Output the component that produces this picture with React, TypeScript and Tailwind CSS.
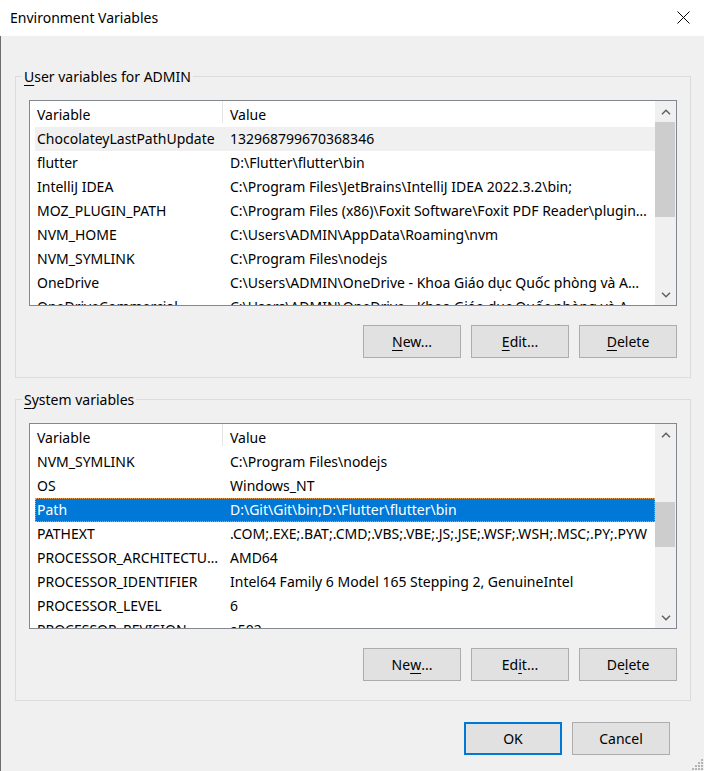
import React from "react";

type Row = [string, string];

const userRows: Row[] = [
  ["ChocolateyLastPathUpdate", "132968799670368346"],
  ["flutter", "D:\\Flutter\\flutter\\bin"],
  ["IntelliJ IDEA", "C:\\Program Files\\JetBrains\\IntelliJ IDEA 2022.3.2\\bin;"],
  ["MOZ_PLUGIN_PATH", "C:\\Program Files (x86)\\Foxit Software\\Foxit PDF Reader\\plugins\\"],
  ["NVM_HOME", "C:\\Users\\ADMIN\\AppData\\Roaming\\nvm"],
  ["NVM_SYMLINK", "C:\\Program Files\\nodejs"],
  ["OneDrive", "C:\\Users\\ADMIN\\OneDrive - Khoa Giáo dục Quốc phòng và An ninh"],
  ["OneDriveCommercial", "C:\\Users\\ADMIN\\OneDrive - Khoa Giáo dục Quốc phòng và An ninh"],
];

const systemRows: Row[] = [
  ["NVM_SYMLINK", "C:\\Program Files\\nodejs"],
  ["OS", "Windows_NT"],
  ["Path", "D:\\Git\\Git\\bin;D:\\Flutter\\flutter\\bin"],
  ["PATHEXT", ".COM;.EXE;.BAT;.CMD;.VBS;.VBE;.JS;.JSE;.WSF;.WSH;.MSC;.PY;.PYW"],
  ["PROCESSOR_ARCHITECTURE", "AMD64"],
  ["PROCESSOR_IDENTIFIER", "Intel64 Family 6 Model 165 Stepping 2, GenuineIntel"],
  ["PROCESSOR_LEVEL", "6"],
  ["PROCESSOR_REVISION", "a502"],
];

function Chevron({ up }: { up: boolean }) {
  return (
    <svg width="10" height="6" viewBox="0 0 10 6" fill="none">
      <path
        d={up ? "M1 5.2 L5 1.2 L9 5.2" : "M1 0.8 L5 4.8 L9 0.8"}
        stroke="#606060"
        strokeWidth="1.5"
      />
    </svg>
  );
}

function ListBox({
  rows,
  hover,
  selected,
  thumbTop,
  thumbHeight,
}: {
  rows: Row[];
  hover?: number;
  selected?: number;
  thumbTop: number;
  thumbHeight: number;
}) {
  return (
    <div className="flex h-[206px] border border-[#828790] bg-white">
      <div className="flex-1 min-w-0 overflow-hidden">
        <div className="flex h-[26px] items-center">
          <div className="ml-[5px] flex h-[22px] w-[188px] items-center self-start border-r border-[#e5e5e5] pl-[2px] pt-[6px]">
            Variable
          </div>
          <div className="flex h-[22px] items-center self-start pl-[7px] pt-[6px]">Value</div>
        </div>
        {rows.map(([k, v], i) => {
          const isSel = i === selected;
          const isHov = i === hover;
          return (
            <div
              key={k + i}
              className={
                "ml-[5px] flex h-[24px] items-center " +
                (isSel
                  ? "bg-[#0078d7] text-white outline outline-1 outline-dotted outline-[#e8a050] -outline-offset-1"
                  : isHov
                  ? "bg-[#f0f0f0]"
                  : "")
              }
            >
              <div className="w-[188px] shrink-0 truncate pl-[2px] pr-[3px]">{k}</div>
              <div className="min-w-0 flex-1 truncate pl-[7px] pr-[8px]">{v}</div>
            </div>
          );
        })}
      </div>
      <div className="flex w-[21px] flex-col bg-[#f0f0f0]">
        <div className="flex h-[21px] items-center justify-center">
          <Chevron up />
        </div>
        <div className="relative flex-1">
          <div
            className="mr-[1px] bg-[#cdcdcd]"
            style={{ marginTop: thumbTop, height: thumbHeight }}
          />
        </div>
        <div className="flex h-[21px] items-center justify-center">
          <Chevron up={false} />
        </div>
      </div>
    </div>
  );
}

function Btn({ children, focus }: { children: React.ReactNode; focus?: boolean }) {
  return (
    <div
      className={
        "flex h-[33px] w-[98px] items-center justify-center bg-[#e1e1e1] " +
        (focus ? "border-2 border-[#0078d7]" : "border border-[#adadad]")
      }
    >
      {children}
    </div>
  );
}

function U({ children }: { children: React.ReactNode }) {
  return <span className="underline decoration-1 underline-offset-[3px]">{children}</span>;
}

function Group({
  label,
  children,
  className,
}: {
  label: React.ReactNode;
  children: React.ReactNode;
  className?: string;
}) {
  return (
    <div className={"relative border border-[#dcdcdc] px-[13px] pb-[19px] pt-[23px] " + (className || "")}>
      <div className="absolute -top-[10px] left-[6px] h-[20px] bg-[#f0f0f0] px-[2px] leading-[20px]">
        {label}
      </div>
      {children}
    </div>
  );
}

export default function App() {
  return (
    <div
      className="relative flex h-[771px] w-[704px] flex-col overflow-hidden bg-[#f0f0f0] text-[14px] leading-[20px] text-black"
      style={{ fontFamily: '"Noto Sans", "Open Sans", sans-serif' }}
    >
      <div className="flex h-[36px] shrink-0 items-center justify-between bg-white pl-[10px] pr-[14px]">
        <span className="pb-[1px]">Environment Variables</span>
        <svg width="13" height="13" viewBox="0 0 13 13" className="mb-[2px]">
          <path d="M0.5 0.5 L12.5 12.5 M12.5 0.5 L0.5 12.5" stroke="#000" strokeWidth="1" />
        </svg>
      </div>
      <div className="flex flex-1 flex-col border-l border-[#6d6d6d] pl-[14px] pr-[13px]">
        <Group
          className="mt-[40px]"
          label={
            <>
              <U>U</U>ser variables for ADMIN
            </>
          }
        >
          <ListBox rows={userRows} hover={0} thumbTop={0} thumbHeight={95} />
          <div className="mt-[19px] flex justify-end gap-[10px]">
            <Btn>
              <U>N</U>ew...
            </Btn>
            <Btn>
              <U>E</U>dit...
            </Btn>
            <Btn>
              <U>D</U>elete
            </Btn>
          </div>
        </Group>
        <Group
          className="mt-[21px]"
          label={
            <>
              <U>S</U>ystem variables
            </>
          }
        >
          <ListBox rows={systemRows} selected={2} thumbTop={57} thumbHeight={45} />
          <div className="mt-[19px] flex justify-end gap-[10px]">
            <Btn>
              Ne<U>w</U>...
            </Btn>
            <Btn>
              Ed<U>i</U>t...
            </Btn>
            <Btn>
              De<U>l</U>ete
            </Btn>
          </div>
        </Group>
        <div className="mt-[21px] flex justify-end gap-[10px] pr-[21px]">
          <Btn focus>OK</Btn>
          <Btn>Cancel</Btn>
        </div>
      </div>
      <svg
        width="12"
        height="12"
        viewBox="0 0 12 12"
        className="absolute bottom-[1px] right-[1px]"
      >
        {[
          [9, 1],
          [6, 4],
          [9, 4],
          [3, 7],
          [6, 7],
          [9, 7],
          [0, 10],
          [3, 10],
          [6, 10],
          [9, 10],
        ].map(([x, y], i) => (
          <rect key={i} x={x + 1} y={y} width="2" height="2" fill="#b4b4b4" />
        ))}
      </svg>
    </div>
  );
}
